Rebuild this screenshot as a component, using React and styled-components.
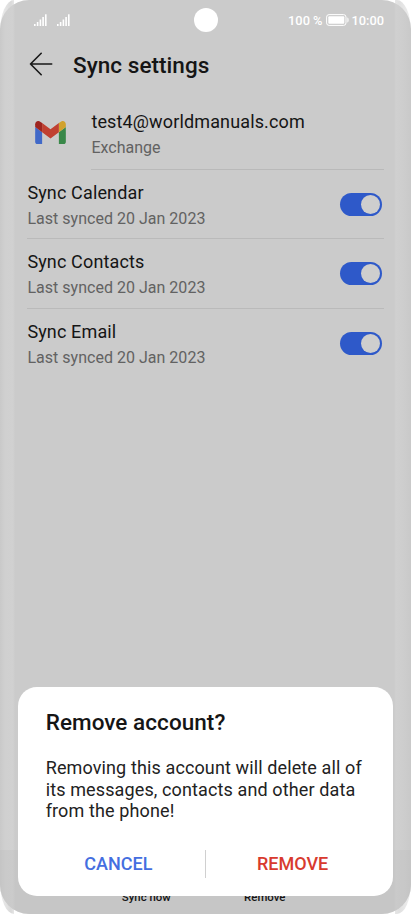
import styled, { createGlobalStyle } from 'styled-components';
import { useState } from 'react';

const GlobalStyle = createGlobalStyle`
	* {
		box-sizing: border-box;
	}

	body {
		margin: 0;
		background-color: white;
		font-family: Roboto, sans-serif;
	}
`;

// curved glass edges, visible behind the rounded screen corners
const Phone = styled.div`
	width: 411px;
	height: 914px;
	border-radius: 14px / 32px;
	background: linear-gradient(
		90deg,
		#ededed 0,
		#dadada 11px,
		#e6e6e6 14px,
		white 14px,
		white 395px,
		#e6e6e6 395px,
		#e0e0e0 399px,
		#eeeeee 411px
	);
`;

const Screen = styled.main`
	position: relative;
	display: flex;
	flex-direction: column;
	width: 411px;
	height: 914px;
	overflow: hidden;
	border-radius: 29px;
	padding: 0 27px;
	color: #151515;
	background: linear-gradient(
		90deg,
		#c9c9c9 0,
		#d0d0d0 5px,
		#d1d1d1 13px,
		#cbcbcb 15px,
		#cbcbcb 394px,
		#d0d0d0 396px,
		#cdcdcd 404px,
		#c9c9c9 411px
	);
`;

const StatusBar = styled.div`
	display: grid;
	grid-template-columns: 1fr 24px 1fr;
	align-items: center;
	height: 40px;
	margin-left: 7px;
	color: white;
	font-size: 12.8px;
	font-weight: 500;
`;

const Signals = styled.div`
	display: flex;
	gap: 10px;
	padding-bottom: 1px;
`;

const Camera = styled.div`
	width: 24px;
	height: 24px;
	margin-left: -3.3px;
	border-radius: 50%;
	background-color: white;
`;

const Power = styled.div`
	display: flex;
	align-items: center;
	justify-content: flex-end;
	gap: 3px;
	white-space: nowrap;
`;

const Header = styled.header`
	display: flex;
	align-items: center;
	gap: 19px;
	height: 50px;
	padding-left: 2px;
`;

const BackButton = styled.button`
	display: flex;
	padding: 0 0 2px;
	border: none;
	background: none;
	cursor: pointer;
`;

const Title = styled.h1`
	margin: 0;
	font-size: 22.5px;
	font-weight: 500;
	line-height: 26px;
	letter-spacing: 0.05px;
`;

const Account = styled.section`
	display: flex;
	height: 80px;
	padding-left: 8px;
`;

const Logo = styled.svg`
	flex: none;
	margin: 31px 25.4px 0 0;
`;

const AccountText = styled.div`
	flex: 1;
	padding-top: 20px;
	border-bottom: 1px solid #b9b9b9;
`;

const Label = styled.div`
	font-size: 18px;
	line-height: 24px;
	letter-spacing: 0.14px;
`;

const Detail = styled.div`
	margin-top: 3px;
	color: #626262;
	font-size: 16px;
	line-height: 22px;
	letter-spacing: 0.02px;
`;

const Row = styled.div`
	display: flex;
	align-items: center;
	justify-content: space-between;
	height: 69.4px;
	padding: 0 2px 0 0.4px;
	border-bottom: ${(props) => (props.$last ? 'none' : '1px solid #bababa')};
`;

const RowText = styled.div`
	padding-top: 2.5px;
`;

const Toggle = styled.button`
	display: flex;
	justify-content: ${(props) => (props.$on ? 'flex-end' : 'flex-start')};
	width: 42px;
	height: 23px;
	padding: 2px;
	border: none;
	border-radius: 12px;
	background-color: ${(props) => (props.$on ? '#2e59c9' : '#a5a5a5')};
	cursor: pointer;
`;

const Knob = styled.span`
	width: 19px;
	height: 19px;
	border-radius: 50%;
	background-color: #cecece;
`;

const BottomBar = styled.nav`
	display: flex;
	align-items: flex-end;
	height: 64px;
	margin: auto -27px 0;
	padding: 0 87px 9px;
	background-color: rgba(180, 180, 180, 0.22);
`;

const BottomItem = styled.div`
	flex: 1;
	font-size: 11.4px;
	font-weight: 500;
	line-height: 16px;
	text-align: center;
`;

const Dialog = styled.section`
	position: absolute;
	left: 18px;
	top: 687px;
	width: 375px;
	height: 209px;
	padding: 22px 27.7px 0;
	border-radius: 19px;
	background-color: white;
`;

const Message = styled.p`
	margin: 22px -8px 0 0;
	color: #222;
	font-size: 18px;
	line-height: 21.7px;
	letter-spacing: 0.12px;
`;

const Actions = styled.div`
	display: flex;
	align-items: center;
	margin: 28px -28px 0;
	padding: 0 14px;
`;

const Action = styled.button`
	flex: 1;
	padding: 0;
	border: none;
	background: none;
	color: ${(props) => props.$color};
	font-family: inherit;
	font-size: 18px;
	font-weight: 500;
	line-height: 28px;
	cursor: pointer;
`;

const Divider = styled.span`
	width: 1px;
	height: 28px;
	background-color: #d0d0d0;
`;

const SignalIcon = () => (
	<svg width="13" height="12" viewBox="0 0 13 12" fill="white">
		<rect x="0" y="10" width="1.6" height="2" />
		<rect x="2.8" y="8" width="1.6" height="4" />
		<rect x="5.6" y="5.5" width="1.6" height="6.5" />
		<rect x="8.3" y="3" width="1.6" height="9" />
		<rect x="11" y="0.3" width="1.6" height="11.7" />
	</svg>
);

const BatteryIcon = () => (
	<svg width="23" height="12" viewBox="0 0 23 12" fill="white">
		<rect x="0.6" y="0.6" width="19.4" height="10.8" rx="2.5" fill="none" stroke="white" strokeWidth="1" />
		<rect x="2.3" y="2.3" width="16" height="7.4" rx="1" />
		<path d="M21.4 3.5c1.6.3 1.6 4.7 0 5z" />
	</svg>
);

const BackIcon = () => (
	<svg width="25" height="24" viewBox="0 0 25 24" fill="none" stroke="#181818" strokeWidth="1.6" strokeLinecap="round" strokeLinejoin="round">
		<path d="M12.2 1.3 1.5 12l10.7 10.7M1.5 12h21.2" />
	</svg>
);

const MailLogo = () => (
	<Logo width="31" height="23" viewBox="52 42 88 66">
		<path fill="#4169c8" d="M58 108h14V74L52 59v43c0 3.32 2.69 6 6 6" />
		<path fill="#398849" d="M120 108h14c3.32 0 6-2.69 6-6V59l-20 15" />
		<path fill="#d1a22d" d="M120 48v26l20-15v-8c0-7.42-8.47-11.65-14.4-7.2" />
		<path fill="#c04031" d="M72 74V48l24 18 24-18v26L96 92" />
		<path fill="#9e251f" d="M52 51v8l20 15V48l-5.6-4.2c-5.94-4.45-14.4-.22-14.4 7.2" />
	</Logo>
);

const SyncRow = ({ label, last }) => {
	const [on, setOn] = useState(true);

	return (
		<Row $last={last}>
			<RowText>
				<Label>{label}</Label>
				<Detail>Last synced 20 Jan 2023</Detail>
			</RowText>
			<Toggle $on={on} role="switch" aria-checked={on} aria-label={label} onClick={() => setOn(!on)}>
				<Knob />
			</Toggle>
		</Row>
	);
};

const App = () => {
	return (
		<Phone>
			<GlobalStyle />
			<Screen>
				<StatusBar>
					<Signals>
						<SignalIcon />
						<SignalIcon />
					</Signals>
					<Camera />
					<Power>
						<span>100 %</span>
						<BatteryIcon />
						<span>10:00</span>
					</Power>
				</StatusBar>
				<Header>
					<BackButton aria-label="Back">
						<BackIcon />
					</BackButton>
					<Title>Sync settings</Title>
				</Header>
				<Account>
					<MailLogo />
					<AccountText>
						<Label>test4@worldmanuals.com</Label>
						<Detail>Exchange</Detail>
					</AccountText>
				</Account>
				<SyncRow label="Sync Calendar" />
				<SyncRow label="Sync Contacts" />
				<SyncRow label="Sync Email" last />
				<BottomBar>
					<BottomItem>Sync now</BottomItem>
					<BottomItem>Remove</BottomItem>
				</BottomBar>
				<Dialog role="dialog" aria-label="Remove account?">
					<Title as="h2">Remove account?</Title>
					<Message>
						Removing this account will delete all of
						<br />
						its messages, contacts and other data
						<br />
						from the phone!
					</Message>
					<Actions>
						<Action $color="#446ee0">CANCEL</Action>
						<Divider />
						<Action $color="#d83a2e">REMOVE</Action>
					</Actions>
				</Dialog>
			</Screen>
		</Phone>
	);
};

export default App;
